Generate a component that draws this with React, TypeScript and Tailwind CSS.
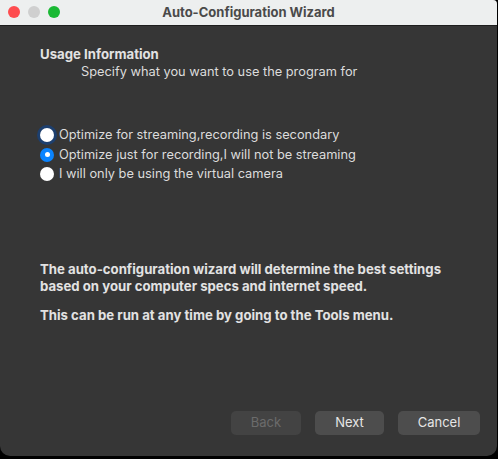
const options = [
  "Optimize for streaming,recording is secondary",
  "Optimize just for recording,I will not be streaming",
  "I will only be using the virtual camera",
];

const Radio = ({ checked, focused }: { checked?: boolean; focused?: boolean }) => {
  if (checked) {
    return (
      <span className="flex h-[14px] w-[14px] items-center justify-center rounded-full bg-[#0a84ff]">
        <span className="h-[5px] w-[5px] rounded-full bg-white" />
      </span>
    );
  }
  return (
    <span
      className={
        focused
          ? "h-[14px] w-[14px] rounded-full bg-white shadow-[0_0_0_3px_#1d3f6e]"
          : "h-[14px] w-[14px] rounded-full bg-white"
      }
    />
  );
};

const App = () => {
  return (
    <div className="h-[459px] w-[498px] bg-black font-['Inter',sans-serif]">
      <div className="flex h-[456px] w-[497px] flex-col overflow-hidden rounded-tr-[4px] rounded-b-[10px] bg-[#363636]">
        {/* Title bar */}
        <div className="relative flex h-[26px] items-center justify-center border-b border-[#1e1e1e] bg-[#edefef]">
          <div className="absolute left-[8px] top-[6px] flex gap-[8px]">
            <span className="h-[12px] w-[12px] rounded-full bg-[#fe4c4f]" />
            <span className="h-[12px] w-[12px] rounded-full bg-[#cfcfcf]" />
            <span className="h-[12px] w-[12px] rounded-full bg-[#1ab934]" />
          </div>
          <h1 className="text-[13px] font-bold text-[#4a4a4a]">Auto-Configuration Wizard</h1>
        </div>

        {/* Body */}
        <div className="flex flex-1 flex-col px-[40px] pt-[20px]">
          <p className="text-[13.2px] font-bold leading-[16px] text-[#e2e2e2]">Usage Information</p>
          <p className="pl-[41px] pt-[2px] text-[12.8px] leading-[16px] text-[#dcdcdc]">
            Specify what you want to use the program for
          </p>

          <div className="mt-[47px] flex flex-col gap-[3.5px]">
            {options.map((o, i) => (
              <label key={o} className="flex h-[16px] items-center gap-[5px] text-[12.8px] text-[#dcdcdc]">
                <Radio checked={i === 1} focused={i === 0} />
                <span>{o}</span>
              </label>
            ))}
          </div>

          <div className="mt-[79px] text-[13.2px] font-bold leading-[17px] text-[#e2e2e2]">
            <p>The auto-configuration wizard will determine the best settings</p>
            <p>based on your computer specs and internet speed.</p>
            <p className="mt-[12px]">This can be run at any time by going to the Tools menu.</p>
          </div>

          <div className="mt-auto mb-[21px] flex justify-end gap-[14px]">
            <button className="h-[24px] w-[70px] rounded-[5px] bg-[#434343] text-[13px] text-[#6b6b6b]">Back</button>
            <button className="h-[24px] w-[69px] rounded-[5px] bg-[#4d4d4d] text-[13px] text-[#e6e6e6]">Next</button>
            <button className="mr-[-23px] h-[24px] w-[82px] rounded-[5px] bg-[#4d4d4d] text-[13px] text-[#e6e6e6]">Cancel</button>
          </div>
        </div>
      </div>
    </div>
  );
};

export default App;
